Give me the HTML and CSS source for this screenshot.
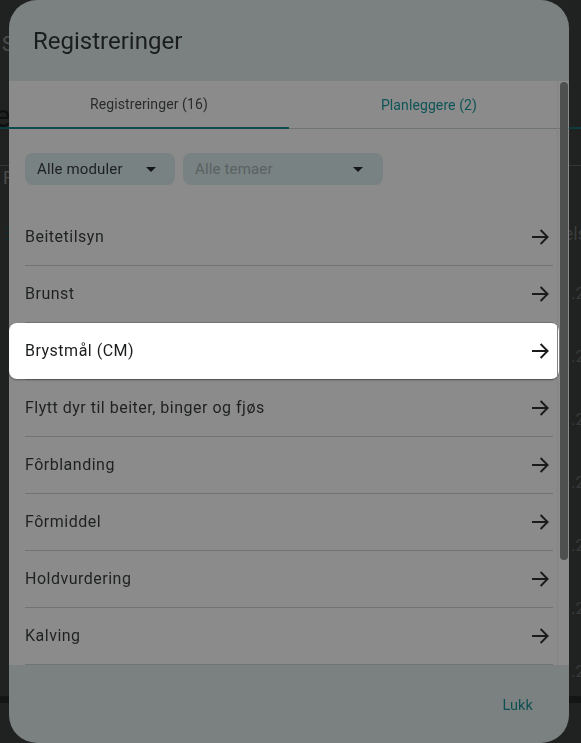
FILE: index.html
```html
<!DOCTYPE html>
<html lang="no">
<head>
<meta charset="utf-8">
<title>Registreringer</title>
<link rel="stylesheet" href="styles.css">
</head>
<body>
<div class="page">
  <div class="pg-row pg-r1"><span class="pg-s">S</span></div>
  <div class="pg-row pg-r2"><span class="pg-e">e</span></div>
  <div class="pg-tabline"></div>
  <div class="pg-row pg-r3"><span class="pg-f">F</span></div>
  <div class="pg-row pg-r4"><span class="pg-menu">&#9776;</span><span class="pg-els">els</span></div>
  <div class="pg-row pg-num"><span></span><span>.2</span></div>
  <div class="pg-row pg-num"><span></span><span>.2</span></div>
  <div class="pg-row pg-num"><span></span><span>.2</span></div>
  <div class="pg-row pg-num"><span></span><span>.2</span></div>
  <div class="pg-row pg-num"><span></span><span>.2</span></div>
  <div class="pg-row pg-num"><span></span><span>.2</span></div>
  <div class="pg-row pg-num pg-last"><span></span><span>.2</span></div>
  <div class="pg-bar"></div>
</div>

<div class="dialog" role="dialog" aria-label="Registreringer">
  <header class="dialog-header">
    <h1 class="dialog-title">Registreringer</h1>
  </header>

  <div class="dialog-body">
    <nav class="tabs">
      <div class="tab tab-active">Registreringer (16)</div>
      <div class="tab tab-inactive">Planleggere (2)</div>
    </nav>

    <div class="filters">
      <div class="select select-modules">
        <span class="select-text">Alle moduler</span>
        <svg class="caret" viewBox="0 0 24 24" width="24" height="24"><path d="M7 10l5 5 5-5z"/></svg>
      </div>
      <div class="select select-themes">
        <span class="select-text placeholder">Alle temaer</span>
        <svg class="caret" viewBox="0 0 24 24" width="24" height="24"><path d="M7 10l5 5 5-5z"/></svg>
      </div>
    </div>

    <ul class="list">
      <li class="item"><div class="item-row"><span>Beitetilsyn</span><svg class="arrow" viewBox="0 0 24 24" width="24" height="24"><path d="M4 12H19.6M12.6 5l7 7-7 7"/></svg></div></li>
      <li class="item"><div class="item-row"><span>Brunst</span><svg class="arrow" viewBox="0 0 24 24" width="24" height="24"><path d="M4 12H19.6M12.6 5l7 7-7 7"/></svg></div></li>
      <li class="item is-spot"><div class="item-row"><span>Brystmål (CM)</span><svg class="arrow" viewBox="0 0 24 24" width="24" height="24"><path d="M4 12H19.6M12.6 5l7 7-7 7"/></svg></div></li>
      <li class="item"><div class="item-row"><span>Flytt dyr til beiter, binger og fjøs</span><svg class="arrow" viewBox="0 0 24 24" width="24" height="24"><path d="M4 12H19.6M12.6 5l7 7-7 7"/></svg></div></li>
      <li class="item"><div class="item-row"><span>Fôrblanding</span><svg class="arrow" viewBox="0 0 24 24" width="24" height="24"><path d="M4 12H19.6M12.6 5l7 7-7 7"/></svg></div></li>
      <li class="item"><div class="item-row"><span>Fôrmiddel</span><svg class="arrow" viewBox="0 0 24 24" width="24" height="24"><path d="M4 12H19.6M12.6 5l7 7-7 7"/></svg></div></li>
      <li class="item"><div class="item-row"><span>Holdvurdering</span><svg class="arrow" viewBox="0 0 24 24" width="24" height="24"><path d="M4 12H19.6M12.6 5l7 7-7 7"/></svg></div></li>
      <li class="item"><div class="item-row"><span>Kalving</span><svg class="arrow" viewBox="0 0 24 24" width="24" height="24"><path d="M4 12H19.6M12.6 5l7 7-7 7"/></svg></div></li>
      <li class="item"><div class="item-row"><span>Kastrering</span><svg class="arrow" viewBox="0 0 24 24" width="24" height="24"><path d="M4 12H19.6M12.6 5l7 7-7 7"/></svg></div></li>
    </ul>

    <div class="scroll-track"><div class="scroll-thumb"></div></div>
  </div>

  <footer class="dialog-footer">
    <button class="btn-text" type="button">Lukk</button>
  </footer>
</div>
</body>
</html>
```

FILE: styles.css
```css
* { box-sizing: border-box; }

html, body {
  margin: 0;
  padding: 0;
}

body {
  width: 581px;
  height: 743px;
  overflow: hidden;
  background: #202221;
  font-family: Roboto, "Noto Sans", "Liberation Sans", sans-serif;
  color: #1c1e1e;
}

/* background page (dimmed, mostly hidden behind the dialog) */
.page {
  display: flex;
  flex-direction: column;
  width: 581px;
  height: 743px;
  overflow: hidden;
  color: #4a4c4b;
}

.pg-row {
  display: flex;
  justify-content: space-between;
  align-items: center;
  padding: 0 0 0 2px;
  flex: none;
}

.pg-r1 { height: 88px; font-size: 20px; }

.pg-r2 {
  height: 39px;
  align-items: flex-end;
  font-size: 32px;
  line-height: 32px;
  color: #0e0f0f;
  padding-left: 0;
}
.pg-e { margin-bottom: -5px; margin-left: -6px; }

.pg-tabline { flex: none; height: 2px; background: #0d3c3e; }

.pg-r3 {
  height: 40px;
  font-size: 18px;
  line-height: 24px;
  border-top: 1px solid #343635;
  margin-top: 36px;
  align-items: flex-start;
  padding-left: 3px;
}

.pg-r4 { height: 56px; font-size: 18px; }
.pg-menu { color: #0c2a2b; padding-left: 2px; }
.pg-els { color: #3a3c3b; font-size: 18px; margin-right: -6px; }

.pg-num {
  height: 63px;
  font-size: 17px;
  color: #383a39;
}
.pg-num:first-of-type { margin-top: 7px; }
.pg-num span:last-child { margin-right: -4px; }

.pg-bar {
  flex: none;
  height: 7px;
  background: #141515;
  margin-top: -6px;
}

/* dialog */
.dialog {
  position: fixed;
  left: 9px;
  top: 0;
  width: 560px;
  height: 743px;
  border-radius: 28px;
  overflow: hidden;
  background: #7b8080;
  display: flex;
  flex-direction: column;
}

.dialog-header {
  height: 81px;
  flex: none;
  display: flex;
  align-items: center;
  padding: 0 24px;
}

.dialog-title {
  margin: 0;
  font-size: 24px;
  line-height: 32px;
  font-weight: 400;
  color: #1b1d1d;
}

.dialog-body {
  position: relative;
  height: 584px;
  flex: none;
  background: #8b8b8b;
  overflow: hidden;
}

.tabs {
  display: flex;
  height: 48px;
  border-bottom: 1px solid #6e7373;
}

.tab {
  flex: none;
  width: 280px;
  height: 47px;
  display: flex;
  align-items: center;
  justify-content: center;
  font-size: 14px;
  letter-spacing: 0.1px;
}

.tab-active {
  color: #2a2c2c;
  border-bottom: 2px solid #0d4b4f;
  height: 48px;
  margin-bottom: -1px;
  padding-bottom: 1px;
}

.tab-inactive { color: #0e5457; }

.filters {
  display: flex;
  gap: 8px;
  padding: 24px 16px 0;
}

.select {
  height: 32px;
  border-radius: 8px;
  background: #788282;
  display: flex;
  align-items: center;
  justify-content: space-between;
  padding: 0 12px;
}

.select-modules { width: 150px; }
.select-themes { width: 200px; padding-right: 13px; }

.select-text {
  font-size: 15px;
  letter-spacing: 0.15px;
  color: #1e2020;
}

.select-text.placeholder { color: #5b6161; }

.caret { fill: #151616; flex: none; }

.list {
  list-style: none;
  margin: 24px 16px 0 16px;
  padding: 0;
}

.item { border-bottom: 1px solid #727474; }

.item-row {
  height: 56px;
  display: flex;
  align-items: center;
  justify-content: space-between;
  padding: 0 1px 1px 0;
  font-size: 16px;
  letter-spacing: 0.5px;
  color: #1f2121;
}

.arrow {
  flex: none;
  fill: none;
  stroke: #1a1b1b;
  stroke-width: 1.9;
}

.item.is-spot .item-row {
  background: #ffffff;
  color: #1b1c1c;
  margin: 0 -6px 0 -16px;
  padding: 0 7px 1px 16px;
  border-radius: 8px;
  box-shadow: 0 1px 2px rgba(0, 0, 0, 0.35);
}

.scroll-track {
  position: absolute;
  top: 0;
  right: 0;
  bottom: 0;
  width: 12px;
  border-left: 1px solid #848484;
}

.scroll-thumb {
  margin: 1px 0 0 2px;
  width: 8px;
  height: 478px;
  border-radius: 4px;
  background: #4e504f;
}

.dialog-footer {
  flex: 1;
  display: flex;
  align-items: center;
  justify-content: flex-end;
  padding: 2px 24px 0 0;
}

.btn-text {
  border: 0;
  background: transparent;
  font-family: inherit;
  font-size: 14.5px;
  letter-spacing: 0.1px;
  color: #0e4f52;
  height: 40px;
  padding: 0 12px;
  cursor: pointer;
}
```
